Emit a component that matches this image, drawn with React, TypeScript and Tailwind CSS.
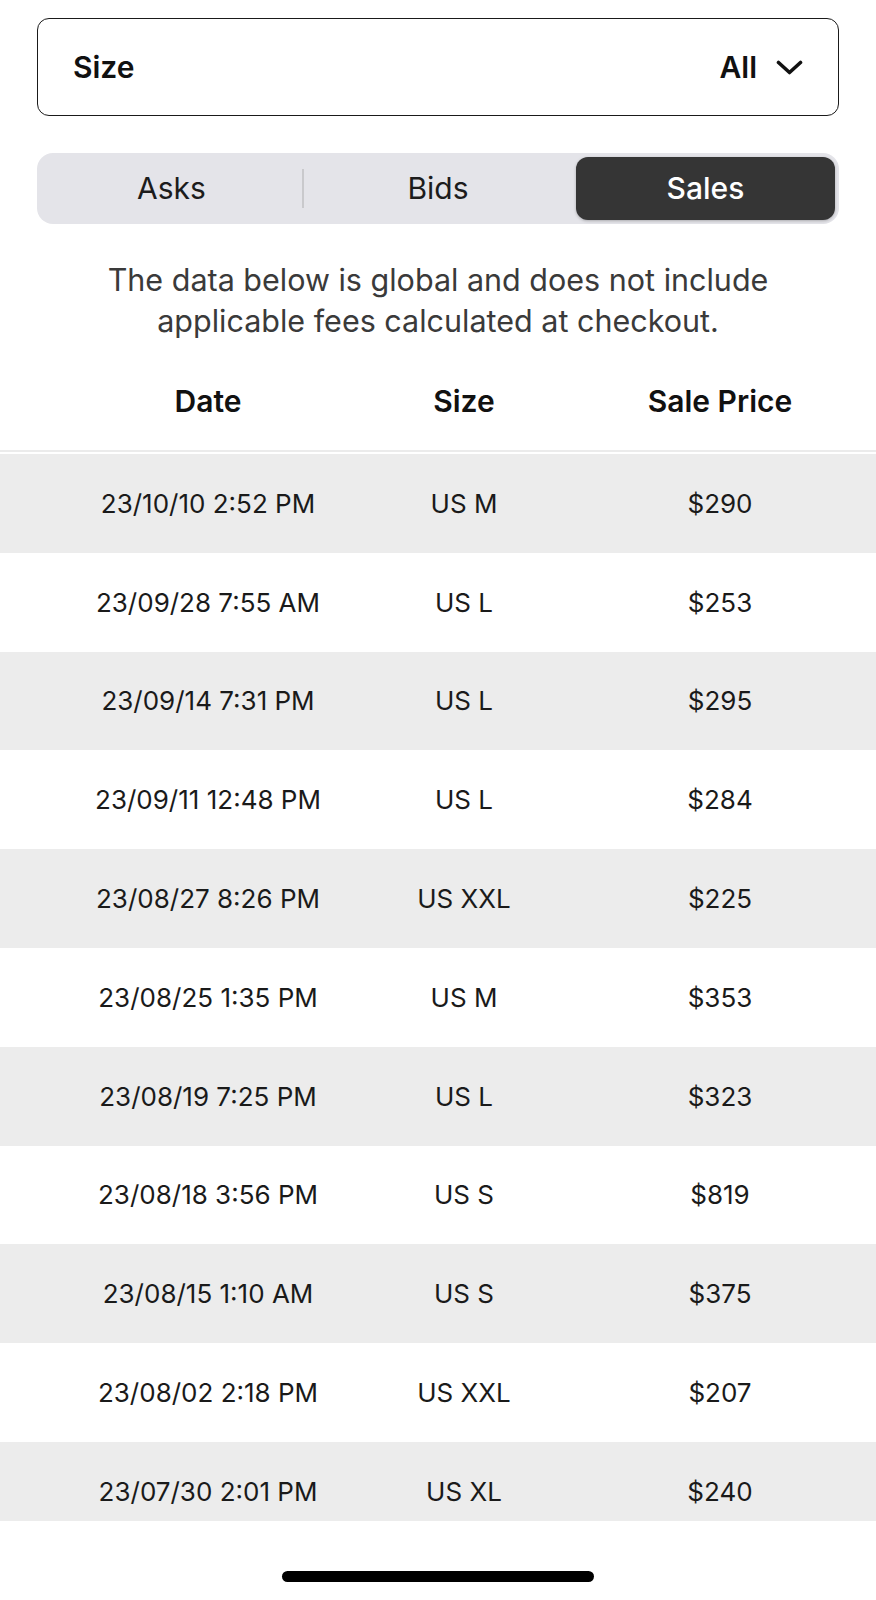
import React from 'react';
import { clsx } from 'clsx';

type Sale = { date: string; size: string; price: string };

const sales: Sale[] = [
  { date: '23/10/10 2:52 PM', size: 'US M', price: '$290' },
  { date: '23/09/28 7:55 AM', size: 'US L', price: '$253' },
  { date: '23/09/14 7:31 PM', size: 'US L', price: '$295' },
  { date: '23/09/11 12:48 PM', size: 'US L', price: '$284' },
  { date: '23/08/27 8:26 PM', size: 'US XXL', price: '$225' },
  { date: '23/08/25 1:35 PM', size: 'US M', price: '$353' },
  { date: '23/08/19 7:25 PM', size: 'US L', price: '$323' },
  { date: '23/08/18 3:56 PM', size: 'US S', price: '$819' },
  { date: '23/08/15 1:10 AM', size: 'US S', price: '$375' },
  { date: '23/08/02 2:18 PM', size: 'US XXL', price: '$207' },
  { date: '23/07/30 2:01 PM', size: 'US XL', price: '$240' },
];

const Chevron = () => (
  <svg width="27" height="15" viewBox="0 0 27 15" fill="none">
    <path
      d="M2.5 2.5 L13.5 12.5 L24.5 2.5"
      stroke="#111"
      strokeWidth="3.6"
      strokeLinecap="round"
      strokeLinejoin="round"
    />
  </svg>
);

export default function App() {
  return (
    <div className="w-[876px] h-[1600px] bg-white flex flex-col overflow-hidden font-['Inter',sans-serif] text-[#111]">
      <div className="h-[1521px] overflow-hidden shrink-0">
        <div className="px-[37px] pt-[18px]">
          {/* size filter */}
          <div className="h-[98px] border-[1.5px] border-[#1a1a1a] rounded-[12px] flex items-center justify-between pl-[35px] pr-[35px]">
            <span className="text-[30px] font-semibold">Size</span>
            <div className="flex items-center gap-[19px]">
              <span className="text-[30px] font-semibold">All</span>
              <Chevron />
            </div>
          </div>

          {/* segmented control */}
          <div className="mt-[37px] h-[71px] bg-[#e4e4e9] rounded-[16px] p-[4px] flex items-stretch text-[30px]">
            <div className="w-[261px] flex items-center justify-center text-[#1c1c1c]">Asks</div>
            <div className="w-[2px] my-[12px] bg-[#c9c9cc]" />
            <div className="w-[268px] flex items-center justify-center text-[#1c1c1c]">Bids</div>
            <div className="flex-1 ml-[4px] flex items-center justify-center rounded-[12px] bg-[#353535] text-white font-medium shadow-[0_1px_3px_rgba(0,0,0,0.25)]">
              Sales
            </div>
          </div>
        </div>

        <p className="mt-[35px] text-center text-[30.5px] leading-[41px] text-[#3a3a3a]">
          The data below is global and does not include
          <br />
          applicable fees calculated at checkout.
        </p>

        {/* table header */}
        <div className="mt-[11px] h-[98px] grid grid-cols-[256px_256px_256px] pl-[80px] items-center text-center text-[30px] font-semibold">
          <span>Date</span>
          <span>Size</span>
          <span>Sale Price</span>
        </div>
        <div className="h-[2px] bg-[#ebebeb]" />

        <div className="mt-[2px]">
          {sales.map((s, i) => (
            <div
              key={i}
              className={clsx(
                'h-[98.8px] grid grid-cols-[256px_256px_256px] pl-[80px] items-center text-center text-[26px] text-[#1a1a1a]',
                i % 2 === 0 ? 'bg-[#ececec]' : 'bg-white'
              )}
            >
              <span>{s.date}</span>
              <span>{s.size}</span>
              <span>{s.price}</span>
            </div>
          ))}
        </div>
      </div>

      {/* home indicator */}
      <div className="flex-1 flex justify-center pt-[50px]">
        <div className="w-[312px] h-[11px] rounded-full bg-black" />
      </div>
    </div>
  );
}
